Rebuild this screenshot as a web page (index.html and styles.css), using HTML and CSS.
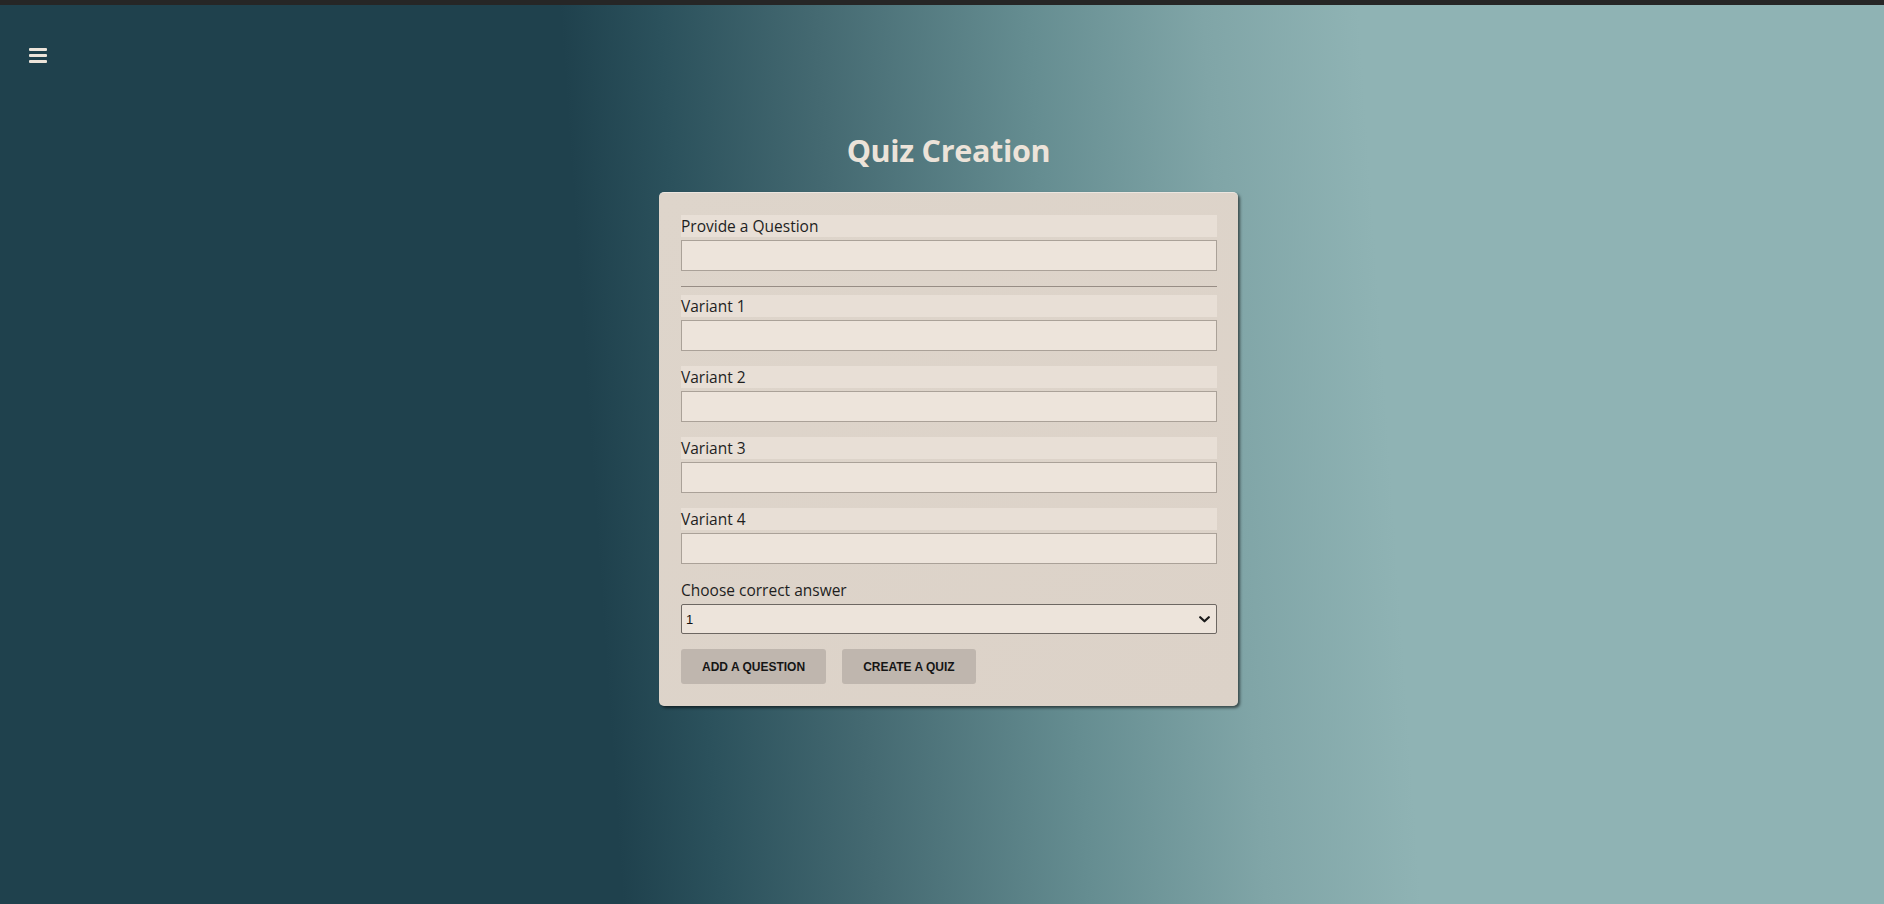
FILE: index.html
```html
<!DOCTYPE html>
<html lang="en">
<head>
<meta charset="utf-8">
<title>Quiz Creation</title>
<link rel="stylesheet" href="styles.css">
</head>
<body>
<div class="topbar"></div>
<div class="page">
  <header class="nav">
    <button class="menu" aria-label="menu"><span></span><span></span><span></span></button>
  </header>
  <main class="main">
    <h1 class="title">Quiz Creation</h1>
    <form class="card">
      <label class="field-label">Provide a Question</label>
      <input class="field-input" type="text">
      <hr class="divider">
      <div class="group">
        <label class="field-label">Variant 1</label>
        <input class="field-input" type="text">
      </div>
      <div class="group">
        <label class="field-label">Variant 2</label>
        <input class="field-input" type="text">
      </div>
      <div class="group">
        <label class="field-label">Variant 3</label>
        <input class="field-input" type="text">
      </div>
      <div class="group">
        <label class="field-label">Variant 4</label>
        <input class="field-input" type="text">
      </div>
      <label class="plain-label">Choose correct answer</label>
      <div class="select-wrap">
        <select class="select">
          <option>1</option>
          <option>2</option>
          <option>3</option>
          <option>4</option>
        </select>
        <svg class="chevron" width="11" height="7" viewBox="0 0 11 7"><path d="M1.2 1.2 L5.5 5.3 L9.8 1.2" fill="none" stroke="#1a1a1a" stroke-width="2.2" stroke-linecap="round" stroke-linejoin="round"/></svg>
      </div>
      <div class="actions">
        <button type="button" class="btn">Add a question</button>
        <button type="button" class="btn">Create a quiz</button>
      </div>
    </form>
  </main>
</div>
</body>
</html>
```
FILE: styles.css
```css
html, body {
  margin: 0;
  padding: 0;
  height: 100%;
}
body {
  font-family: "Open Sans", "Noto Sans", sans-serif;
  display: flex;
  flex-direction: column;
  background: #1f414d;
}
.topbar {
  height: 5px;
  background: #262626;
  flex: none;
}
.page {
  flex: 1;
  position: relative;
  background: linear-gradient(86deg, #1f414d 0%, #1f414d 32%, #2b515c 37%, #446971 45%, #658d91 56%, #80a5a7 65%, #8fb3b4 73%, #8fb3b4 100%);
}
.nav {
  height: 36px;
  padding: 43px 0 0 29px;
  box-sizing: content-box;
}
.menu {
  display: flex;
  flex-direction: column;
  gap: 3px;
  padding: 0;
  margin: 0;
  border: 0;
  background: none;
  width: 18px;
  cursor: pointer;
}
.menu span {
  display: block;
  width: 18px;
  height: 3px;
  background: #ece4da;
  border-radius: 1px;
}
.main {
  display: flex;
  flex-direction: column;
  align-items: center;
  padding-left: 13px;
}
.title {
  margin: 47px 0 23px;
  font-family: "Open Sans", sans-serif;
  font-weight: 700;
  font-size: 30.5px;
  line-height: 38px;
  color: #ece3d9;
  letter-spacing: -0.3px;
}
.card {
  width: 579px;
  box-sizing: border-box;
  padding: 22px 21px 22px 22px;
  background: linear-gradient(135deg, #ded5cb 0%, #dcd2c8 100%);
  border-radius: 5px;
  border-top: 1px solid #ece6e0;
  box-shadow: 2px 2px 3px rgba(0, 0, 0, 0.55);
  display: flex;
  flex-direction: column;
}
.field-label {
  display: block;
  height: 22px;
  line-height: 22px;
  background: #e8dfd6;
  color: #1e1e1e;
  font-size: 15.5px;
  margin-bottom: 3px;
}
.field-input {
  display: block;
  box-sizing: border-box;
  width: 100%;
  height: 31px;
  margin: 0;
  border: 1px solid #aaa198;
  background: #ede4db;
  font: 15px "Open Sans", sans-serif;
  padding: 0 4px;
  outline: none;
}
.divider {
  border: 0;
  height: 1px;
  background: #978d85;
  margin: 15px 0 8px;
}
.group {
  margin-bottom: 15px;
}
.plain-label {
  display: block;
  height: 22px;
  line-height: 22px;
  color: #1e1e1e;
  font-size: 15.5px;
  margin-bottom: 3px;
}
.select-wrap {
  position: relative;
}
.select {
  display: block;
  box-sizing: border-box;
  width: 100%;
  height: 30px;
  margin: 0;
  appearance: none;
  -webkit-appearance: none;
  border: 1px solid #6d6762;
  border-radius: 2px;
  background: #ede4db;
  font: 13px "Liberation Sans", Arial, sans-serif;
  color: #111;
  padding: 0 4px;
  outline: none;
}
.chevron {
  position: absolute;
  right: 7px;
  top: 12px;
  pointer-events: none;
}
.actions {
  display: flex;
  gap: 16px;
  margin-top: 15px;
}
.btn {
  height: 35px;
  padding: 0 21px;
  border: 0;
  border-radius: 3px;
  background: #bfb6ae;
  color: #151515;
  font: 700 12px "Liberation Sans", Arial, sans-serif;
  text-transform: uppercase;
  letter-spacing: 0;
  cursor: pointer;
}
```
